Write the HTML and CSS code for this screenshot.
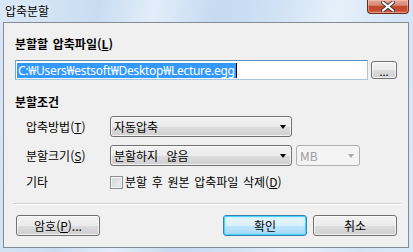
FILE: index.html
```html
<!DOCTYPE html>
<html lang="ko">
<head>
<meta charset="utf-8">
<link rel="stylesheet" href="styles.css">
</head>
<body>
<div class="window">
  <div class="titlebar">
    <span class="title">압축분할</span>
    <span class="close">
      <svg width="14" height="11" viewBox="0 0 14 11">
        <path d="M2 1.5 L12 9.5 M12 1.5 L2 9.5" stroke="#3a3a3a" stroke-width="4" stroke-linecap="square" fill="none"/>
        <path d="M2 1.5 L12 9.5 M12 1.5 L2 9.5" stroke="#ffffff" stroke-width="2" stroke-linecap="square" fill="none"/>
      </svg>
    </span>
  </div>
  <div class="client">
    <div class="group-label">분할할 압축파일(<u>L</u>)</div>
    <div class="file-row">
      <div class="textbox"><span class="sel">C:₩Users₩estsoft₩Desktop₩Lecture.egg</span><span class="caret"></span></div>
      <button class="btn btn-small">...</button>
    </div>
    <div class="group-label section">분할조건</div>
    <div class="form">
      <span class="field-label">압축방법(<u>T</u>)</span>
      <div class="combo combo-wide"><span class="combo-text">자동압축</span><span class="arrow"></span></div>
      <span class="field-label">분할크기(<u>S</u>)</span>
      <div class="combo-row">
        <div class="combo combo-wide"><span class="combo-text wide-gap">분할하지 않음</span><span class="arrow"></span></div>
        <div class="combo combo-unit disabled"><span class="combo-text">MB</span><span class="arrow"></span></div>
      </div>
      <span class="field-label">기타</span>
      <div class="check-row"><span class="checkbox"></span><span>분할 후 원본 압축파일 삭제(<u>D</u>)</span></div>
    </div>
    <div class="separator"></div>
    <div class="buttons">
      <button class="btn btn-dlg">암호(<u>P</u>)...</button>
      <span class="spacer"></span>
      <button class="btn btn-dlg btn-default">확인</button>
      <button class="btn btn-dlg">취소</button>
    </div>
  </div>
</div>
</body>
</html>
```

FILE: styles.css
```css
html, body {
  margin: 0;
  padding: 0;
}
body {
  font-family: "Noto Sans CJK KR", "Noto Sans", sans-serif;
  font-size: 12px;
  word-spacing: 1.3px;
  color: #000;
}
.window {
  width: 413px;
  height: 252px;
  display: flex;
  flex-direction: column;
  overflow: hidden;
  background: linear-gradient(100deg, #d9e8f7 0%, #c9ddf2 22%, #e2edf9 34%, #c4daf1 48%, #cfe1f4 60%, #e6f0fa 74%, #d2e4f6 88%, #dbe9f8 100%);
}
.titlebar {
  height: 22px;
  display: flex;
  align-items: flex-start;
  padding-left: 5px;
}
.title {
  line-height: 22px;
  font-size: 12px;
  color: #000;
  text-shadow: 0 0 6px rgba(255,255,255,0.9);
}
.close {
  margin-left: auto;
  margin-right: 4px;
  width: 40px;
  height: 13px;
  border: 1px solid #6b2a1e;
  border-top: none;
  border-radius: 0 0 4px 4px;
  background: linear-gradient(#e9a797 0%, #d88a76 40%, #c3492d 50%, #c84a2c 80%, #d9734f 100%);
  box-shadow: inset 0 0 0 1px rgba(255,210,200,0.45);
  display: flex;
  align-items: center;
  justify-content: center;
}
.close svg {
  display: block;
}
.client {
  margin: 0 4px 4px 3px;
  flex: 1;
  border: 1px solid #858b93;
  background: #f0f0f0;
  padding: 13px 11px 0 11px;
}
.group-label {
  font-weight: bold;
  line-height: 16px;
  height: 16px;
}
.group-label.section {
  margin-top: 14px;
}
.file-row {
  display: flex;
  align-items: center;
  gap: 3px;
  margin-top: 8px;
}
.textbox {
  width: 351px;
  height: 18px;
  border: 1px solid #a9c5df;
  border-top-color: #5b8fbb;
  border-left-color: #7ba4c9;
  background: #fff;
  display: flex;
  align-items: center;
  padding-left: 1px;
  box-sizing: content-box;
  font-family: "Noto Sans", "Noto Sans CJK KR", sans-serif;
  word-spacing: 0;
  letter-spacing: -0.28px;
}
.sel {
  background: #3399ff;
  color: #fff;
  line-height: 15px;
  height: 15px;
  padding: 0 1px;
  white-space: nowrap;
}
.caret {
  width: 1px;
  height: 15px;
  background: #000;
}
.btn {
  font-family: inherit;
  font-size: 12px;
  word-spacing: inherit;
  color: #000;
  border: 1px solid #707070;
  border-radius: 3px;
  background: linear-gradient(#f2f2f2 0%, #ebebeb 50%, #dddddd 51%, #cfcfcf 100%);
  box-shadow: inset 0 0 0 1px rgba(255,255,255,0.7);
  padding: 0;
  margin: 0;
  line-height: 16px;
}
.btn-small {
  width: 26px;
  height: 18px;
  line-height: 12px;
  font-size: 11px;
  padding-top: 2px;
}
.form {
  display: grid;
  grid-template-columns: 84px auto;
  grid-template-rows: 21px 21px 15px;
  row-gap: 8px;
  margin-top: 6px;
  padding-left: 11px;
  align-items: center;
}
.field-label {
  line-height: 16px;
}
.combo-row {
  display: flex;
  gap: 4px;
}
.combo {
  height: 21px;
  box-sizing: border-box;
  border: 1px solid #707070;
  border-radius: 3px;
  background: linear-gradient(#f2f2f2 0%, #ebebeb 50%, #dddddd 51%, #cfcfcf 100%);
  box-shadow: inset 0 0 0 1px rgba(255,255,255,0.7);
  display: flex;
  align-items: center;
  padding: 0 5px 0 3px;
}
.combo-wide {
  width: 182px;
}
.combo-unit {
  width: 64px;
}
.combo-text {
  flex: 1;
  line-height: 16px;
  white-space: nowrap;
}
.combo-text.wide-gap {
  word-spacing: 5px;
}
.arrow {
  width: 0;
  height: 0;
  border-left: 3.5px solid transparent;
  border-right: 3.5px solid transparent;
  border-top: 4px solid #000;
  margin-top: 1px;
}
.combo.disabled {
  border-color: #adb2b5;
  background: #f4f4f4;
  box-shadow: none;
}
.combo.disabled .combo-text {
  color: #9d9d9d;
}
.combo.disabled .arrow {
  border-top-color: #a8a8a8;
}
.check-row {
  display: flex;
  align-items: center;
  gap: 2px;
  line-height: 16px;
  margin-top: 1px;
}
.checkbox {
  width: 11px;
  height: 11px;
  border: 1px solid #8f8f8f;
  background: linear-gradient(135deg, #cbcfd5 0%, #f6f6f6 100%);
  box-shadow: inset 0 0 0 1px #f4f4f4, inset 0 0 0 2px #dcdde0;
  flex: none;
}
.separator {
  margin: 14px -4px 0 -2px;
  border-top: 1px solid #d5d5d0;
  border-bottom: 1px solid #ffffff;
}
.buttons {
  display: flex;
  gap: 6px;
  margin-top: 10px;
  padding-left: 1px;
}
.spacer {
  flex: 1;
}
.btn-dlg {
  width: 84px;
  height: 21px;
}
.btn-default {
  border-color: #3c7fb1;
  background: linear-gradient(#eaf6fd 0%, #d9f0fc 50%, #bee6fd 51%, #a7d9f5 100%);
  box-shadow: inset 0 0 0 1px #48d8fb, inset 0 0 2px 1px rgba(72,216,251,0.6);
}
```
